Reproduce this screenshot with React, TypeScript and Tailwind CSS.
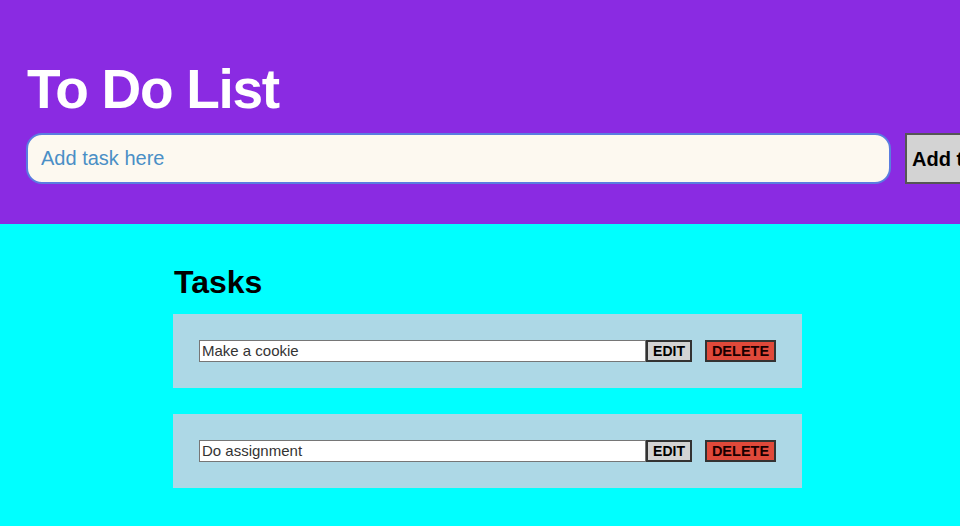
import React from 'react';

const tasks = ['Make a cookie', 'Do assignment'];

export default function App() {
    return (
        <div className="min-h-[526px] w-[960px] overflow-hidden bg-[#00ffff] font-['Liberation_Sans',Arial,sans-serif]">
            <header className="bg-[#8a2be2] px-[26px] pt-[57px] pb-[40px]">
                <h1 className="pl-[1px] text-[55px] leading-[64px] font-bold tracking-[-1.3px] text-white">To Do List</h1>
                <div className="mt-[12px] flex gap-[14px] w-[1100px]">
                    <input
                        className="w-[865px] h-[51px] shrink-0 rounded-[16px] border-2 border-[#5a7de0] bg-[#fdf9f0] px-[13px] text-[20px] text-black placeholder:text-[#4a8fc6] outline-none"
                        placeholder="Add task here"
                    />
                    <button className="h-[51px] shrink-0 border-2 border-[#555] bg-[#d3d3d3] px-[5px] text-[20px] font-bold text-black">
                        Add task
                    </button>
                </div>
            </header>
            <main className="ml-[173px] w-[629px] pt-[40px]">
                <h2 className="pl-[1px] text-[32px] leading-[37px] font-bold text-black">Tasks</h2>
                <div className="mt-[13px] flex flex-col gap-[26px]">
                    {tasks.map((t) => (
                        <div key={t} className="bg-[#add8e6] p-[26px] flex items-center">
                            <input
                                readOnly
                                value={t}
                                className="w-[447px] h-[22px] border border-[#767676] bg-white px-[2px] text-[15px] text-[#333] outline-none"
                            />
                            <button className="w-[46px] h-[22px] border-2 border-[#333] bg-[#d3d3d3] text-[14px] font-bold leading-none text-black">
                                EDIT
                            </button>
                            <button className="ml-[13px] w-[71px] h-[22px] border-2 border-[#333] bg-[#e0493a] text-[14.5px] font-bold leading-none text-[#1a0000]">
                                DELETE
                            </button>
                        </div>
                    ))}
                </div>
            </main>
        </div>
    );
}
